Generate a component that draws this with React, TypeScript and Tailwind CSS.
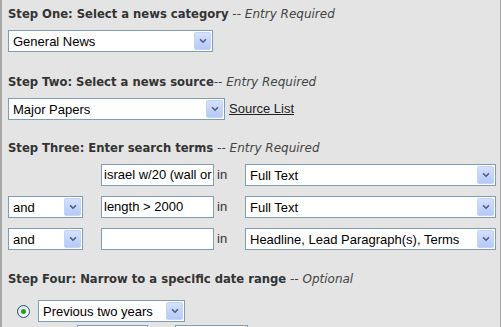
import { ChevronDown } from "lucide-react";

const Arrow = () => (
  <span className="flex h-[18px] w-[17px] items-center justify-center rounded-[2px] border border-[#c4d4f7] bg-gradient-to-b from-[#d5e1fd] to-[#b5c9f7]">
    <ChevronDown className="h-[10px] w-[10px] text-[#4d6185]" strokeWidth={4} />
  </span>
);

const Select = ({ value, w }: { value: string; w: string }) => (
  <div
    className={`${w} flex h-[22px] items-center justify-between border border-[#7f9db9] bg-white pl-[4px] pr-[1px] text-[13px] text-black`}
  >
    <span className="whitespace-nowrap leading-none">{value}</span>
    <Arrow />
  </div>
);

const Input = ({ value, w }: { value?: string; w: string }) => (
  <div
    className={`${w} flex h-[22px] items-center overflow-hidden whitespace-nowrap border border-[#7f9db9] bg-white px-[2px] text-[13px] text-black`}
  >
    {value}
  </div>
);

const Heading = ({ title, note }: { title: string; note: string }) => (
  <div
    className="whitespace-nowrap text-[11.6px] leading-[14px] text-[#333]"
    style={{ fontFamily: "'DejaVu Sans', Verdana, sans-serif" }}
  >
    <b>{title}</b>
    <i className="text-[12px] text-[#444]">{note}</i>
  </div>
);

const In = () => <span className="w-[31px] pl-[3px] text-[13px] text-[#333]">in</span>;

export default function App() {
  return (
    <div
      className="h-[327px] w-[502px] overflow-hidden bg-white"
      style={{ fontFamily: "'Liberation Sans', Arial, sans-serif" }}
    >
      <div className="flex h-full w-[501px] flex-col border-l-2 border-r border-[#a8a8a8] bg-[#e4e4e4]">
        <div className="flex h-px">
          <div className="w-[331px]" />
          <div className="flex-1 bg-[#b0b0b0]" />
        </div>

        <div className="flex flex-col pl-[6px]">
          {/* Step one */}
          <div className="mt-[7px]">
            <Heading title="Step One: Select a news category" note=" -- Entry Required" />
          </div>
          <div className="mt-[9px]">
            <Select value="General News" w="w-[205px]" />
          </div>

          {/* Step two */}
          <div className="mt-[23px]">
            <Heading title="Step Two: Select a news source" note="-- Entry Required" />
          </div>
          <div className="mt-[9px] flex items-center gap-[4px]">
            <Select value="Major Papers" w="w-[217px]" />
            <a className="text-[13px] text-[#222] underline">Source List</a>
          </div>

          {/* Step three */}
          <div className="mt-[21px]">
            <Heading title="Step Three: Enter search terms" note=" -- Entry Required" />
          </div>
          <div className="mt-[9px] flex flex-col gap-[10px]">
            <div className="flex items-center">
              <div className="w-[93px]" />
              <Input value="israel w/20 (wall or" w="w-[113px]" />
              <In />
              <Select value="Full Text" w="w-[251px]" />
            </div>
            <div className="flex items-center">
              <div className="w-[93px]">
                <Select value="and" w="w-[75px]" />
              </div>
              <Input value="length > 2000" w="w-[113px]" />
              <In />
              <Select value="Full Text" w="w-[251px]" />
            </div>
            <div className="flex items-center">
              <div className="w-[93px]">
                <Select value="and" w="w-[75px]" />
              </div>
              <Input w="w-[113px]" />
              <In />
              <Select value="Headline, Lead Paragraph(s), Terms" w="w-[251px]" />
            </div>
          </div>

          {/* Step four */}
          <div className="mt-[22px]">
            <Heading title="Step Four: Narrow to a specific date range" note=" -- Optional" />
          </div>
          <div className="mt-[14px] flex items-center">
            <div className="ml-[9px] mr-[8px] flex h-[13px] w-[13px] items-center justify-center rounded-full border border-[#1c5180] bg-gradient-to-br from-[#dcdcd7] to-white">
              <div className="h-[5px] w-[5px] rounded-full bg-[#21a121]" />
            </div>
            <Select value="Previous two years" w="w-[147px]" />
          </div>
          <div className="mt-[3px] flex">
            <div className="ml-[69px] h-[22px] w-[71px] border border-[#7f9db9] bg-white" />
            <div className="ml-[27px] h-[22px] w-[73px] border border-[#7f9db9] bg-white" />
          </div>
        </div>
      </div>
    </div>
  );
}
